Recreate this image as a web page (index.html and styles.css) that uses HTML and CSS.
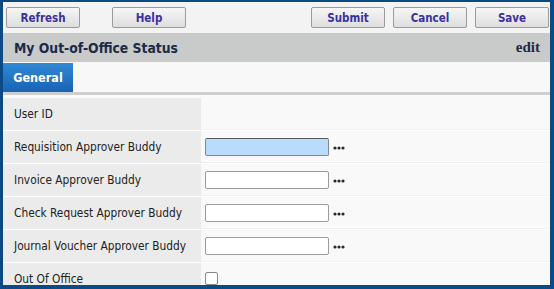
FILE: index.html
```html
<!DOCTYPE html>
<html>
	<head>
		<title>My Out-of-Office Status</title>
		<meta charset="utf-8">
		<link rel="stylesheet" href="styles.css">
	</head>

	<body>
		<div class="frame">
			<div class="toolbar">
				<div class="group">
					<button class="btn">Refresh</button>
					<button class="btn">Help</button>
				</div>
				<div class="group right">
					<button class="btn">Submit</button>
					<button class="btn">Cancel</button>
					<button class="btn">Save</button>
				</div>
			</div>

			<div class="header">
				<h1>My Out-of-Office Status</h1>
				<a class="edit">edit</a>
			</div>

			<div class="tabs">
				<div class="tab active">General</div>
			</div>

			<div class="form">
				<div class="row">
					<div class="label">User ID</div>
					<div class="value"></div>
				</div>
				<div class="row">
					<div class="label">Requisition Approver Buddy</div>
					<div class="value">
						<input type="text" class="field focus">
						<svg class="more" width="12" height="4" viewBox="0 0 12 4"><circle cx="2" cy="2" r="1.6"/><circle cx="6" cy="2" r="1.6"/><circle cx="10" cy="2" r="1.6"/></svg>
					</div>
				</div>
				<div class="row">
					<div class="label">Invoice Approver Buddy</div>
					<div class="value">
						<input type="text" class="field">
						<svg class="more" width="12" height="4" viewBox="0 0 12 4"><circle cx="2" cy="2" r="1.6"/><circle cx="6" cy="2" r="1.6"/><circle cx="10" cy="2" r="1.6"/></svg>
					</div>
				</div>
				<div class="row">
					<div class="label">Check Request Approver Buddy</div>
					<div class="value">
						<input type="text" class="field">
						<svg class="more" width="12" height="4" viewBox="0 0 12 4"><circle cx="2" cy="2" r="1.6"/><circle cx="6" cy="2" r="1.6"/><circle cx="10" cy="2" r="1.6"/></svg>
					</div>
				</div>
				<div class="row">
					<div class="label">Journal Voucher Approver Buddy</div>
					<div class="value">
						<input type="text" class="field">
						<svg class="more" width="12" height="4" viewBox="0 0 12 4"><circle cx="2" cy="2" r="1.6"/><circle cx="6" cy="2" r="1.6"/><circle cx="10" cy="2" r="1.6"/></svg>
					</div>
				</div>
				<div class="row last">
					<div class="label">Out Of Office</div>
					<div class="value"><span class="check"></span></div>
				</div>
			</div>
		</div>
	</body>
</html>
```

FILE: styles.css
```css
html,body {
	margin: 0;
	padding: 0;
	background-color: #0b4a85;
}

.frame {
	width: 547px;
	height: 283px;
	margin: 2px 4px 4px 3px;
	background-color: #f9f9f9;
	overflow: hidden;
	font-family: 'DejaVu Sans Condensed', 'DejaVu Sans', sans-serif;
}

.toolbar {
	display: flex;
	justify-content: space-between;
	height: 31px;
	padding: 5px 1px 0 3px;
	box-sizing: border-box;
	background-color: #f3f3f3;
}

.group {
	display: flex;
	gap: 32px;
}

.group.right {
	gap: 8px;
}

.btn {
	width: 74px;
	height: 21px;
	padding: 0;
	border: 1px solid #9a9a9a;
	border-radius: 2px;
	background: linear-gradient(#f6f6f6, #dedede);
	color: #3b31a3;
	font-family: 'DejaVu Sans Condensed', sans-serif;
	font-weight: bold;
	font-size: 11.5px;
}

.header {
	display: flex;
	justify-content: space-between;
	align-items: center;
	height: 29px;
	padding: 0 10px 0 11px;
	background-color: #c9caca;
}

h1 {
	margin: 0;
	font-size: 13.8px;
	color: #1c2a47;
}

.edit {
	font-family: 'Liberation Serif', serif;
	font-weight: bold;
	font-size: 15px;
	color: #1c2a47;
}

.tabs {
	display: flex;
	height: 33px;
	padding-top: 1px;
	box-sizing: border-box;
	background-color: #f8f8f8;
	border-bottom: 3px solid #cfcfcf;
}

.tab {
	width: 70px;
	display: flex;
	align-items: center;
	justify-content: center;
	font-size: 12.5px;
	font-weight: bold;
	color: #fff;
}

.tab.active {
	background: linear-gradient(#3189d6, #1763b3);
}

.form {
	margin-top: 3px;
}

.row {
	display: grid;
	grid-template-columns: 198px 1fr;
	height: 32px;
	border-bottom: 1px solid #fff;
}

.row.last {
	border-bottom: none;
}

.label {
	display: flex;
	align-items: center;
	padding-left: 11px;
	background-color: #ebebeb;
	font-size: 11.8px;
	color: #222;
	white-space: nowrap;
}

.value {
	display: flex;
	align-items: center;
	gap: 4px;
	padding-left: 4px;
	background-color: #f9f9f9;
	border-bottom: 1px solid #f1f1f1;
}

.field {
	width: 124px;
	height: 18px;
	box-sizing: border-box;
	margin: 0;
	border: 1px solid #9c9c9c;
	border-radius: 2px;
	background-color: #fff;
}

.field.focus {
	background-color: #b9dcfd;
	border-color: #7d8a96;
	border-top-color: #5a5a5a;
}

.more {
	fill: #2a2a2a;
	margin-top: 2px;
}

.check {
	width: 13px;
	height: 13px;
	box-sizing: border-box;
	border: 1px solid #8a8a8a;
	border-radius: 2px;
	background-color: #fff;
}
```
